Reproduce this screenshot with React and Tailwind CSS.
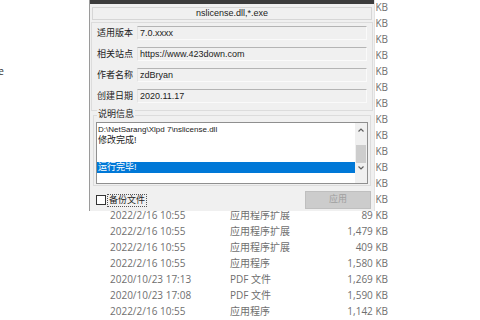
import React from 'react';

const files = [
  ['2022/2/16 10:55', '应用程序扩展', '2,048 KB'],
  ['2022/2/16 10:55', '应用程序扩展', '1,122 KB'],
  ['2022/2/16 10:55', '应用程序扩展', '3,516 KB'],
  ['2022/2/16 10:55', '应用程序扩展', '9,402 KB'],
  ['2022/2/16 10:55', '应用程序扩展', '772 KB'],
  ['2022/2/16 10:55', '应用程序扩展', '1,008 KB'],
  ['2022/2/16 10:55', '应用程序扩展', '5,310 KB'],
  ['2022/2/16 10:55', '应用程序扩展', '664 KB'],
  ['2022/2/16 10:55', '应用程序扩展', '2,287 KB'],
  ['2022/2/16 10:55', '应用程序扩展', '149 KB'],
  ['2022/2/16 10:55', '应用程序扩展', '4,773 KB'],
  ['2022/2/16 10:55', '应用程序扩展', '318 KB'],
  ['2022/2/16 10:55', '应用程序扩展', '1,926 KB'],
  ['2022/2/16 10:55', '应用程序扩展', '89 KB'],
  ['2022/2/16 10:55', '应用程序扩展', '1,479 KB'],
  ['2022/2/16 10:55', '应用程序扩展', '409 KB'],
  ['2022/2/16 10:55', '应用程序', '1,580 KB'],
  ['2020/10/23 17:13', 'PDF 文件', '1,269 KB'],
  ['2020/10/23 17:08', 'PDF 文件', '1,590 KB'],
  ['2022/2/16 10:55', '应用程序', '1,142 KB'],
];

const fields = [
  ['适用版本', '7.0.xxxx'],
  ['相关站点', 'https://www.423down.com'],
  ['作者名称', 'zdBryan'],
  ['创建日期', '2020.11.17'],
];

// the patch window uses a small classic win32 look
const ui = { fontFamily: '"Liberation Sans", "Noto Sans CJK SC", sans-serif' };

function Field({ label, value }) {
  return (
    <div className="flex items-center h-[14px]">
      <span className="w-[40px] text-[9px] text-[#222] leading-none">{label}</span>
      <div className="flex-1 h-[14px] bg-[#f0f0f0] border-t border-t-[#b4b4b4] border-l border-l-[#e3e3e3] border-r border-r-[#fafafa] border-b border-b-[#fafafa] flex items-center pl-[2px] text-[9px] text-[#222] leading-none">
        {value}
      </div>
    </div>
  );
}

function PatchDialog() {
  return (
    <div
      className="absolute left-[89px] top-0 w-[286px] h-[211px] bg-[#f0f0f0] border-l border-l-[#9a9a9a] border-r border-r-[#e2e2e2] flex flex-col"
      style={ui}
    >
      <div className="h-[4px] bg-[#3c3c3c]" />
      <div className="mx-[2px] mt-[3px] h-[13px] border border-[#d6d6d6] bg-[#f0f0f0] flex items-center justify-center text-[9px] text-[#222] leading-none">
        nslicense.dll,*.exe
      </div>
      <div className="mx-[1px] mt-[2px] h-[89px] border border-[#dcdcdc] flex flex-col gap-[7px] pt-[3px] pl-[5px] pr-[5px]">
        {fields.map(([l, v]) => (
          <Field key={l} label={l} value={v} />
        ))}
      </div>
      <div className="relative mx-[3px] mt-[4px] h-[71px] border border-[#dcdcdc] pt-[6px] px-[2px]">
        <span className="absolute left-[3px] -top-[6px] bg-[#f0f0f0] px-px text-[9px] leading-none text-[#222]">说明信息</span>
        <div className="h-[62px] border border-[#8f8f8f] bg-white flex">
          <div className="flex-1 flex flex-col leading-none text-[#222] pt-[2px]">
            <span className="h-[10px] pl-px text-[8px] flex items-center">D:\NetSarang\Xlpd 7\nslicense.dll</span>
            <span className="h-[11px] pl-px text-[9px] flex items-center">修改完成!</span>
            <span className="h-[16px]" />
            <span className="h-[11px] pl-px text-[9px] flex items-center bg-[#0078d7] text-white">运行完毕!</span>
          </div>
          <div className="w-[12px] bg-[#f0f0f0] flex flex-col items-center">
            <svg width="12" height="12" viewBox="0 0 12 12" className="mt-[1px]">
              <path d="M3.5 7.5 L6 5 L8.5 7.5" stroke="#606060" strokeWidth="1.2" fill="none" />
            </svg>
            <div className="mt-[9px] w-[10px] h-[18px] bg-[#cdcdcd]" />
            <svg width="12" height="10" viewBox="0 0 12 10">
              <path d="M3.5 3.5 L6 6 L8.5 3.5" stroke="#606060" strokeWidth="1.2" fill="none" />
            </svg>
          </div>
        </div>
      </div>
      <div className="flex items-center justify-between mt-[5px] pl-[6px] pr-[3px]">
        <div className="flex items-center gap-px">
          <div className="w-[10px] h-[10px] border border-[#333] bg-white" />
          <span className="text-[9px] leading-none text-[#222] border border-dotted border-[#555] px-px py-px">备份文件</span>
        </div>
        <div className="w-[66px] h-[18px] bg-[#cccccc] border border-[#bfbfbf] flex items-center justify-center text-[9px] text-[#a0a0a0]">
          应用
        </div>
      </div>
    </div>
  );
}

export default function App() {
  return (
    <div
      className="relative w-[480px] h-[320px] bg-white overflow-hidden flex"
      style={{ fontFamily: '"Open Sans", "Noto Sans CJK SC", sans-serif' }}
    >
      <div className="w-[20px] -mt-px flex flex-col">
        <div className="h-[64px]" />
        <div className="h-4 flex items-center text-[10px] text-[#333] -ml-[8px]">ne</div>
      </div>
      <div className="-mt-px flex flex-col">
        {files.map(([d, t, s], i) => (
          <div key={i} className="h-4 flex items-center text-[10px] text-[#6f6f6f] leading-none">
            <span className="w-[120px] pl-[90px] whitespace-nowrap box-content">{d}</span>
            <span className="w-[78px] whitespace-nowrap">{t}</span>
            <span className="w-[80px] text-right whitespace-nowrap">{s}</span>
          </div>
        ))}
      </div>
      <PatchDialog />
    </div>
  );
}
